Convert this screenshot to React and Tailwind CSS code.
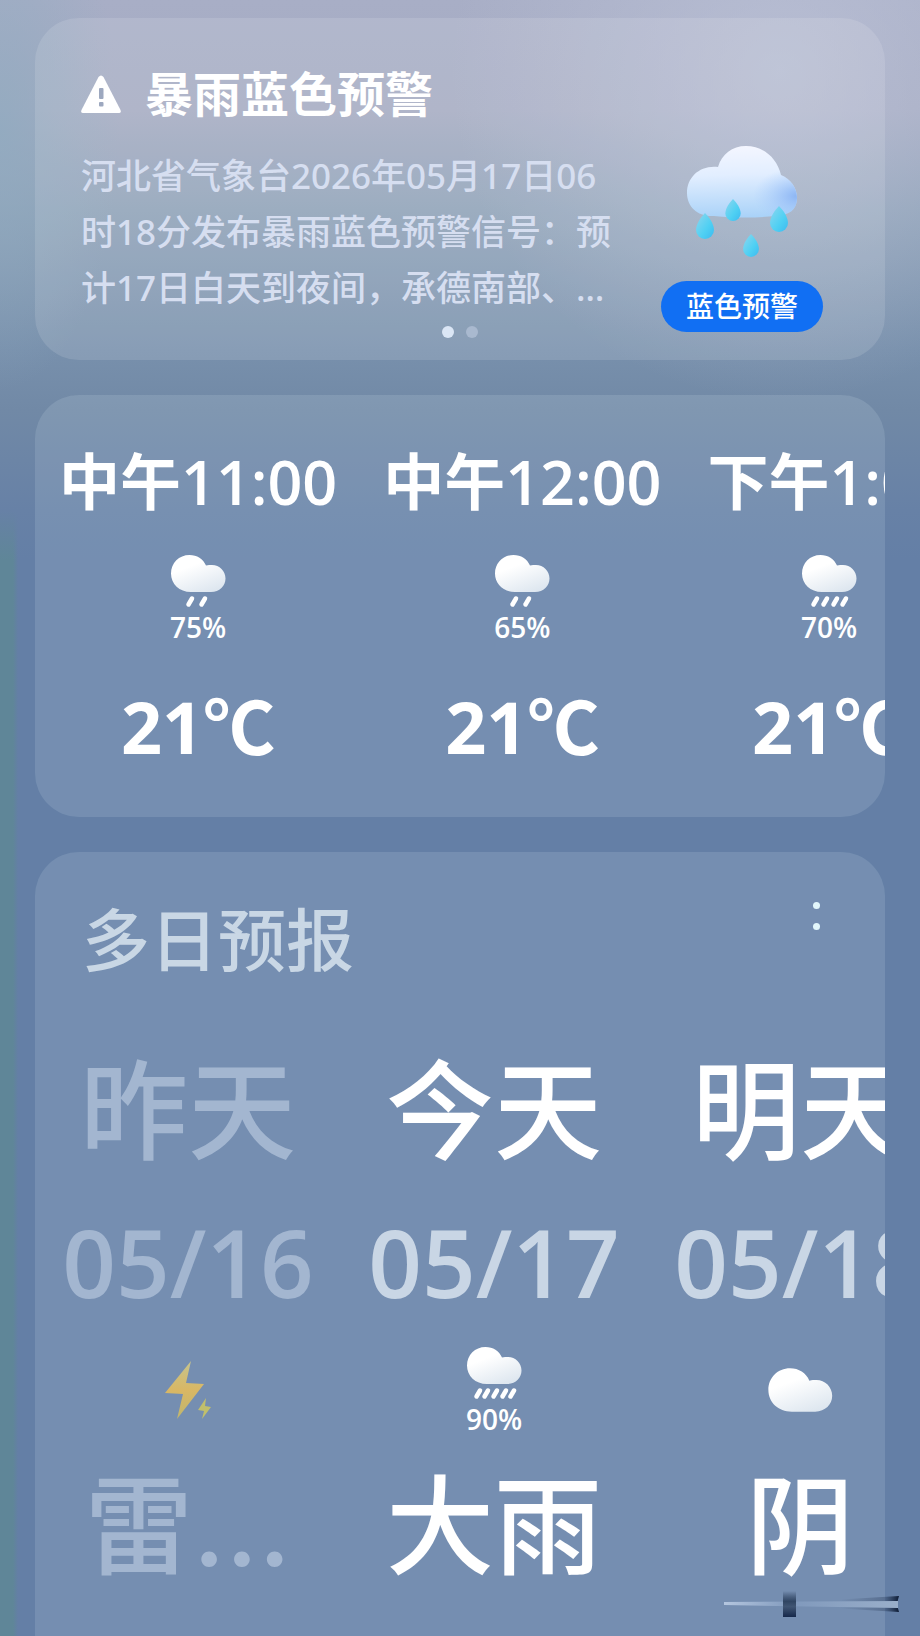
const hours = [
  { time: "中午11:00", chance: "75%", drops: [20, 33], temp: "21℃" },
  { time: "中午12:00", chance: "65%", drops: [20, 33], temp: "21℃" },
  { time: "下午1:00", chance: "70%", drops: [14, 24, 34, 43], temp: "21℃" },
];

const days = [
  { name: "昨天", date: "05/16", icon: "thunder", text: "雷…", past: true },
  {
    name: "今天",
    date: "05/17",
    icon: "rain",
    drops: [12, 20, 29, 38, 46],
    chance: "90%",
    text: "大雨",
  },
  { name: "明天", date: "05/18", icon: "cloud", text: "阴" },
];

const CloudShape = () => (
  <>
    <defs>
      <linearGradient id="cloudFill" x1="0.2" y1="0" x2="0.75" y2="1">
        <stop offset="0.3" stopColor="#ffffff" />
        <stop offset="1" stopColor="#dde6ef" />
      </linearGradient>
    </defs>

    <path
      fill="url(#cloudFill)"
      d="M19.500 2C9 2 1 10 1 20.500S9.300 39 21 39H41C49.500 39 55.500 33 55.500 25.500S49.500 12 42 12C39.700 12 38.500 12 36 12.500C33.200 6 27 2 19.500 2Z"
    />
  </>
);

const RainIcon = ({ drops }) => (
  <svg viewBox="0 0 56 56" className="h-14 w-14" aria-hidden="true">
    <CloudShape />

    {drops.map((x) => (
      <path
        key={x}
        d={`M${x + 2} 45.500L${x - 1.5} 51.500`}
        stroke="#fff"
        strokeWidth="4.500"
        strokeLinecap="round"
      />
    ))}
  </svg>
);

const CloudIcon = () => (
  <svg viewBox="0 0 56 41" className="h-12 w-[66px]" aria-hidden="true">
    <CloudShape />
  </svg>
);

const ThunderIcon = () => (
  <svg viewBox="0 0 48 60" className="h-[60px] w-12" aria-hidden="true">
    <defs>
      <linearGradient id="boltFill" x1="0" y1="0" x2="0" y2="1">
        <stop offset="0" stopColor="#c6c48e" />
        <stop offset="0.5" stopColor="#d9b764" />
        <stop offset="1" stopColor="#bfb66f" />
      </linearGradient>
    </defs>

    <path fill="url(#boltFill)" d="M27 1L1 33L19 34L13 59L40 24L22 23Z" />
    <path fill="#c0bf6c" d="M42 38L34 50L40 51L38 59L47 47L41 46Z" />
  </svg>
);

const WarningIcon = () => (
  <svg viewBox="0 0 40 38" className="h-[38px] w-10" aria-hidden="true">
    <path
      fill="#fff"
      d="M17.500 2Q20 -1 22.500 2L39.500 35Q40.500 38 38 38H2Q-0.500 38 0.500 35Z"
    />
    <rect x="18" y="13" width="4.500" height="11" rx="1" fill="#9da8bf" />
    <rect x="18" y="27" width="4.500" height="4.500" rx="1" fill="#9da8bf" />
  </svg>
);

const StormIcon = () => (
  <svg viewBox="0 0 112 114" className="h-[114px] w-28" aria-hidden="true">
    <defs>
      <linearGradient id="stormFill" x1="0.45" y1="0" x2="0.5" y2="1">
        <stop offset="0" stopColor="#f4f6ff" />
        <stop offset="0.4" stopColor="#e2eeff" />
        <stop offset="1" stopColor="#a9d2f8" />
      </linearGradient>
      <radialGradient id="stormShade" cx="1" cy="0.7" r="0.4">
        <stop offset="0" stopColor="#8cb5f4" />
        <stop offset="1" stopColor="#a9cdfd" stopOpacity="0" />
      </radialGradient>
      <linearGradient id="dropFill" x1="0" y1="0" x2="1" y2="1">
        <stop offset="0" stopColor="#8fd6ee" />
        <stop offset="0.6" stopColor="#4fd0f3" />
        <stop offset="1" stopColor="#3dbaf0" />
      </linearGradient>
      <path
        id="drop"
        d="M0 0C4 4 9 11 9 17A9 9 0 0 1 -9 17C-9 11 -4 4 0 0Z"
      />
    </defs>

    {["url(#stormFill)", "url(#stormShade)"].map((fill) => (
      <path
        key={fill}
        fill={fill}
        d="M28 71C12 72 1 62 1 48C1 32 14 20 32 22C36 9 46 1 60 1C77 1 91 13 95 30C105 34 111 43 111 53C111 65 103 70 90 71C70 73 50 73 28 71Z"
      />
    ))}

    <g fill="url(#dropFill)">
      <use href="#drop" x="19" y="68" />
      <use href="#drop" transform="translate(47 54) scale(0.850)" />
      <use href="#drop" x="93" y="61" />
      <use href="#drop" transform="translate(65 89) scale(0.880)" />
    </g>
  </svg>
);

const AlertCard = () => (
  <section className="mx-[35px] rounded-[44px] bg-white/12 pt-[46px] pr-[62px] pb-[22px] pl-[46px]">
    <div className="flex justify-between">
      <div className="shrink-0">
        <h2 className="flex items-center gap-6 text-[48px] leading-[60px] font-bold text-white">
          <WarningIcon />
          暴雨蓝色预警
        </h2>

        <p className="mt-6 font-['Noto_Sans','Noto_Sans_CJK_SC',sans-serif] text-[35px] leading-[56px] font-medium whitespace-nowrap text-[#d6def0]">
          河北省气象台2026年05月17日06
          <br />
          时18分发布暴雨蓝色预警信号：预
          <br />
          计17日白天到夜间，承德南部、…
        </p>
      </div>

      <div className="flex shrink-0 flex-col items-center justify-end gap-[22px]">
        <StormIcon />

        <span className="-mb-4 rounded-full bg-[#116ff3] px-[25px] text-[28px] leading-[51px] font-medium text-white">
          蓝色预警
        </span>
      </div>
    </div>

    {/* Pager */}

    <div className="mt-[10px] -mr-4 flex justify-center gap-3">
      <span className="h-3 w-3 rounded-full bg-[#dbe6f5]" />
      <span className="h-3 w-3 rounded-full bg-[#a9b9cf]" />
    </div>
  </section>
);

const HourlyCard = () => (
  <section className="mx-[35px] overflow-hidden rounded-[44px] bg-[#e6f8ff]/13 py-[47px] pl-6">
    <ul className="flex gap-[46px] whitespace-nowrap text-white">
      {hours.map((hour) => (
        <li key={hour.time} className="flex shrink-0 flex-col items-center">
          <span className="text-[61px] leading-[80px] font-semibold">
            {hour.time}
          </span>

          <div className="mt-[31px] flex flex-col items-center gap-[2px]">
            <RainIcon drops={hour.drops} />
            <span className="text-[28px] leading-8 font-semibold">
              {hour.chance}
            </span>
          </div>

          <span className="mt-[39px] text-[72px] leading-[88px] font-bold">
            {hour.temp}
          </span>
        </li>
      ))}
    </ul>
  </section>
);

const DayIcon = ({ day }) => {
  if (day.icon === "thunder") return <ThunderIcon />;
  if (day.icon === "cloud") return <CloudIcon />;

  return (
    <div className="flex flex-col items-center gap-[2px]">
      <RainIcon drops={day.drops} />
      <span className="text-[28px] leading-8 font-semibold text-white">
        {day.chance}
      </span>
    </div>
  );
};

const DailyCard = () => (
  <section className="mx-[35px] flex-1 overflow-hidden rounded-t-[44px] bg-[#e6f8ff]/13 pt-10 pb-11">
    <div className="flex items-start justify-between pr-[53px] pl-[47px]">
      <h2 className="text-[68px] leading-[96px] font-medium text-[#c9d7e5]">
        多日预报
      </h2>

      <button
        type="button"
        aria-label="更多"
        className="flex h-12 w-8 flex-col items-center justify-center gap-[14px]"
      >
        <span className="h-[7px] w-[7px] rounded-full bg-[#e2f6fb]" />
        <span className="h-[7px] w-[7px] rounded-full bg-[#e2f6fb]" />
      </button>
    </div>

    <ul className="mt-[58px] flex whitespace-nowrap">
      {days.map((day) => (
        <li
          key={day.date}
          className={`flex w-[306px] shrink-0 flex-col items-center font-medium ${
            day.past ? "text-[#a3b6d0]" : "text-white"
          }`}
        >
          <span className="text-[108px] leading-[128px]">{day.name}</span>

          <span
            className={`mt-8 text-[94px] leading-[112px] font-semibold ${
              day.past ? "" : "text-[#c9d6e5]"
            }`}
          >
            {day.date}
          </span>

          <div className="mt-[27px] flex h-[90px] items-center">
            <DayIcon day={day} />
          </div>

          <span className="mt-7 font-[Inter,'Noto_Sans_CJK_SC',sans-serif] text-[108px] leading-[128px]">
            {day.text}
          </span>
        </li>
      ))}
    </ul>
  </section>
);

const App = () => {
  return (
    <main
      lang="zh-CN"
      className="relative flex min-h-screen flex-col gap-[35px] overflow-hidden bg-[#647fa6] bg-[radial-gradient(circle_at_780px_70px,#c2c8dc99,#c2c8dc00_330px),radial-gradient(ellipse_120px_260px_at_0px_130px,#90abc0cc,#84a0bc00),linear-gradient(180deg,#a8aec6_0px,#a5abc2_110px,#8fa2b8_210px,#7890ac_350px,#7189a6_410px,#6781a6_510px,#647fa600_560px),linear-gradient(90deg,#5f8698_0px,#5f8698_13px,#647fa6_18px)] bg-[length:100%_560px,100%_560px,100%_560px,100%_100%] bg-no-repeat pt-[18px] font-['Open_Sans','Noto_Sans_CJK_SC',sans-serif]"
    >
      <AlertCard />
      <HourlyCard />
      <DailyCard />

      {/* Light streak over the bottom corner */}

      <svg
        viewBox="0 0 178 28"
        className="absolute right-5 bottom-[18px] h-7 w-[178px]"
        aria-hidden="true"
      >
        <defs>
          <linearGradient id="streakDark" x1="0" y1="0" x2="1" y2="0">
            <stop offset="0.5" stopColor="#233553" stopOpacity="0" />
            <stop offset="0.88" stopColor="#233553" stopOpacity="0.35" />
            <stop offset="1" stopColor="#0c1a33" />
          </linearGradient>
          <linearGradient id="streakLight" x1="0" y1="0" x2="1" y2="0">
            <stop offset="0" stopColor="#b4c6df" />
            <stop offset="0.4" stopColor="#8099bc" />
            <stop offset="1" stopColor="#9aafca" />
          </linearGradient>
          <linearGradient id="streakKnob" x1="0" y1="0" x2="0" y2="1">
            <stop offset="0" stopColor="#20324f" stopOpacity="0" />
            <stop offset="0.4" stopColor="#304562" />
            <stop offset="0.6" stopColor="#405573" />
            <stop offset="1" stopColor="#16284a" />
          </linearGradient>
        </defs>

        <path fill="url(#streakDark)" d="M60 13L177 6Q174 14 177 22L60 15Z" />
        <path fill="url(#streakLight)" d="M2 12L176 11V18L2 15Z" />
        <rect x="61" y="1" width="13" height="26" fill="url(#streakKnob)" />
      </svg>
    </main>
  );
};

export default App;
